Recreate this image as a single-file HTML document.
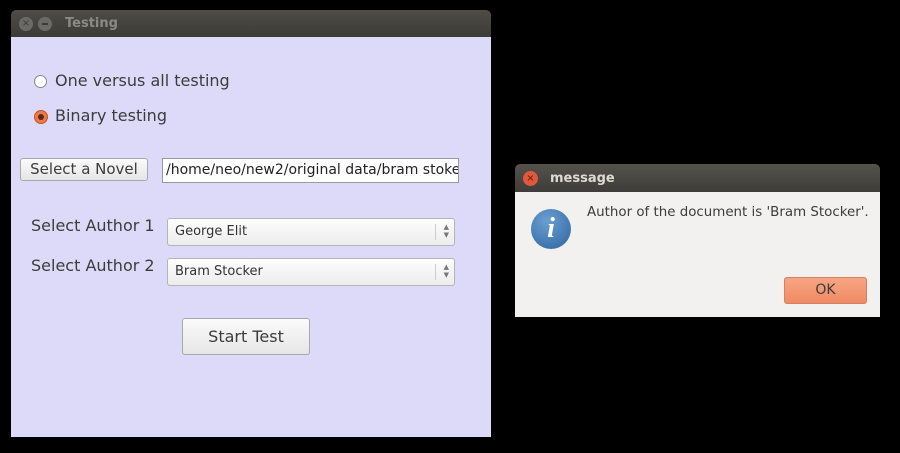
<!DOCTYPE html>
<html><head><style>
body{margin:0;width:900px;height:453px;background:#000;position:relative;overflow:hidden;font-family:"DejaVu Sans","Liberation Sans",sans-serif;}
.a{position:absolute;}
.t{color:#3c3c3c;font-size:16px;white-space:nowrap;}
.btn{position:absolute;border:1px solid #a8a8a8;border-radius:3px;background:linear-gradient(#fbfbfb,#e6e6e6);color:#3c3c3c;text-align:center;box-sizing:border-box;white-space:nowrap;}
.combo{position:absolute;border:1px solid #b4b4b4;border-radius:3px;background:linear-gradient(#fefefe,#ececec);box-sizing:border-box;font-size:13px;color:#333;padding-left:7px;}
.combo .s{position:absolute;right:18px;top:5px;bottom:5px;border-left:1px solid #ccc;}
.combo .ar{position:absolute;right:5px;top:4px;font-size:7px;line-height:8px;color:#777;}
</style></head><body>
<div class="a" style="left:11px;top:10px;width:480px;height:27px;background:linear-gradient(#4f4c46,#3c3b37);border-radius:5px 5px 0 0;"></div>
<div class="a" style="left:19px;top:17px;width:14px;height:14px;border-radius:50%;background:#6b6a66;color:#3c3b37;font-size:10px;line-height:14px;text-align:center;">×</div>
<div class="a" style="left:38px;top:17px;width:14px;height:14px;border-radius:50%;background:#6b6a66;"><div class="a" style="left:4px;top:6px;width:6px;height:2px;background:#3c3b37"></div></div>
<div class="a" style="left:65px;top:16px;color:#8c8a84;font-weight:bold;font-size:13px;">Testing</div>
<div class="a" style="left:11px;top:37px;width:480px;height:400px;background:#dcdaf8;"></div>
<div class="a" style="left:34px;top:75px;width:13px;height:13px;border-radius:50%;background:#fff;border:1px solid #888;box-sizing:border-box;"></div>
<div class="a t" style="left:55px;top:71px;">One versus all testing</div>
<div class="a" style="left:34px;top:110px;width:14px;height:14px;border-radius:50%;background:#f07746;border:1px solid #c0552a;box-sizing:border-box;"><div class="a" style="left:3px;top:3px;width:6px;height:6px;border-radius:50%;background:#5a2a18"></div></div>
<div class="a t" style="left:55px;top:106px;">Binary testing</div>
<div class="btn" style="left:20px;top:158px;width:128px;height:23px;font-size:15px;line-height:21px;">Select a Novel</div>
<div class="a" style="left:162px;top:158px;width:297px;height:25px;background:#fff;border:1px solid #999;box-sizing:border-box;font-size:14px;line-height:23px;padding-left:3px;color:#222;overflow:hidden;white-space:nowrap;">/home/neo/new2/original data/bram stoker</div>
<div class="a t" style="left:31px;top:216px;">Select Author 1</div>
<div class="a t" style="left:31px;top:256px;">Select Author 2</div>
<div class="combo" style="left:167px;top:218px;width:288px;height:28px;line-height:26px;">George Elit<div class="s"></div><div class="ar">▲<br>▼</div></div>
<div class="combo" style="left:167px;top:258px;width:288px;height:28px;line-height:26px;">Bram Stocker<div class="s"></div><div class="ar">▲<br>▼</div></div>
<div class="btn" style="left:182px;top:318px;width:128px;height:37px;font-size:16px;line-height:35px;">Start Test</div>

<div class="a" style="left:515px;top:164px;width:365px;height:28px;background:linear-gradient(#55524c,#3e3d39);border-radius:5px 5px 0 0;"></div>
<div class="a" style="left:523px;top:171px;width:15px;height:15px;border-radius:50%;background:#e2583a;color:#5a2010;font-size:10px;line-height:15px;text-align:center;">×</div>
<div class="a" style="left:550px;top:171px;color:#dfdbd2;font-weight:bold;font-size:13px;">message</div>
<div class="a" style="left:515px;top:192px;width:365px;height:125px;background:#f2f1f0;"></div>
<div class="a" style="left:531px;top:209px;width:40px;height:40px;border-radius:50%;background:radial-gradient(circle at 40% 30%,#6a9fd0,#2c64a0);color:#fff;font-family:'Liberation Serif',serif;font-style:italic;font-weight:bold;font-size:28px;line-height:40px;text-align:center;">i</div>
<div class="a" style="left:587px;top:205px;font-size:13.4px;color:#3c3c3c;white-space:nowrap;">Author of the document is 'Bram Stocker'.</div>
<div class="a" style="left:784px;top:277px;width:83px;height:27px;border:1px solid #d4805e;border-radius:3px;background:linear-gradient(#f7a583,#f08a64);box-sizing:border-box;font-size:14px;line-height:25px;text-align:center;color:#3c3c3c;">OK</div>
</body></html>
